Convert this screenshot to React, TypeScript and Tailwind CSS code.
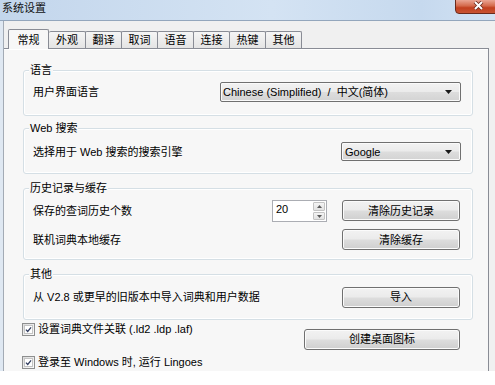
import React from "react";

function Group({
  label,
  className,
  children,
}: {
  label: string;
  className: string;
  children: React.ReactNode;
}) {
  return (
    <div
      className={
        "relative border border-[#d5dfe5] rounded-[3px] shadow-[inset_0_0_0_1px_#ffffff] " +
        className
      }
    >
      <span className="absolute left-[5px] top-[-8px] h-[14px] leading-[14px] px-[1px] bg-[#f7f7f7] whitespace-pre">
        {label}
      </span>
      {children}
    </div>
  );
}

function Arrow() {
  return (
    <svg width="7" height="4" viewBox="0 0 7 4" className="shrink-0">
      <polygon points="0,0 7,0 3.5,4" fill="#1a1a1a" />
    </svg>
  );
}

function Button({ label, className }: { label: string; className: string }) {
  return (
    <div
      className={
        "h-[21px] border border-[#707070] rounded-[3px] shadow-[inset_0_0_0_1px_#fbfbfb] bg-[linear-gradient(to_bottom,#f2f2f2_0%,#ebebeb_48%,#dddddd_52%,#cfcfcf_100%)] flex items-center justify-center leading-[14px] " +
        className
      }
    >
      {label}
    </div>
  );
}

function Check() {
  return (
    <div className="w-[13px] h-[13px] border border-[#8e8f8f] bg-[linear-gradient(to_bottom_right,#dcdcdc,#fbfbfb)] p-[1px] shrink-0">
      <div className="w-full h-full bg-white border border-[#c4c4c4] flex items-center justify-center">
        <svg width="9" height="9" viewBox="0 0 9 9">
          <path d="M1.2 4.6 L3.5 7 L7.8 1.8" stroke="#2f3b5e" strokeWidth="1.6" fill="none" />
        </svg>
      </div>
    </div>
  );
}

const tabs = ["外观", "翻译", "取词", "语音", "连接", "热键", "其他"];

export default function App() {
  return (
    <div className="w-[495px] h-[385px] bg-white overflow-hidden text-[11px] text-black font-['Liberation_Sans','Noto_Sans_CJK_SC',sans-serif]">
      {/* Title bar */}
      <div className="relative h-[21px] border-b border-[#93a6bc] bg-[linear-gradient(to_right,#c3d6ec,#d4e3f3_55%,#c6d9ee_85%,#d2e2f3)] pl-[2px]">
        <span className="block pt-[1px] leading-[14px] text-[#111]">系统设置</span>
        <div className="absolute left-[455px] top-[-1px] w-[46px] h-[15px] rounded-b-[4px] border border-[#6a2a1c] bg-[linear-gradient(to_bottom,#eaa593,#d46a4c_45%,#c2401f_60%,#c95433)] flex justify-start pl-[17px] pt-[1px]">
          <svg width="11" height="10" viewBox="0 0 11 10">
            <path d="M2 1 L9 8 M9 1 L2 8" stroke="#6a2a1c" strokeWidth="3.6" fill="none" />
            <path d="M2 1 L9 8 M9 1 L2 8" stroke="#ffffff" strokeWidth="2" fill="none" />
          </svg>
        </div>
      </div>

      {/* Client area */}
      <div className="h-[350px] flex bg-[#f0f0f0] overflow-hidden">
        <div className="w-[3px] bg-[#dfe8f2]" />
        <div className="flex-1 border-l border-[#a3abb5] flex flex-col pr-[6px]">
          {/* Tabs */}
          <div className="h-[27px] flex items-end pl-[4px] shrink-0">
            <div className="relative z-10 -mb-px w-[41px] h-[20px] border border-b-0 border-[#898c95] rounded-t-[2px] bg-[#f7f7f7] flex items-center justify-center leading-[14px]">
              常规
            </div>
            {tabs.map((t, i) => (
              <div
                key={t}
                className={
                  "h-[17px] w-[37px] border border-b-0 border-[#898c95] rounded-t-[2px] bg-[linear-gradient(to_bottom,#f5f5f5,#e4e4e4)] flex items-center justify-center leading-[14px] " +
                  (i === 0 ? "border-l-0" : "-ml-px")
                }
              >
                {t}
              </div>
            ))}
          </div>

          {/* Panel */}
          <div className="flex-1 border-t border-r border-[#898c95] bg-[#f7f7f7] shadow-[inset_0_1px_0_#ffffff] pl-[19px] pr-[15px] flex flex-col overflow-hidden">
            <Group label="语言" className="mt-[21px] h-[47px] pt-[11px] pl-[9px] pr-[11px]">
              <div className="h-[20px] flex items-center justify-between">
                <span className="leading-[14px]">用户界面语言</span>
                <div className="w-[241px] h-[20px] border border-[#707070] rounded-[2px] shadow-[inset_0_0_0_1px_#fafafa] bg-[linear-gradient(to_bottom,#f2f2f2_0%,#ebebeb_48%,#dddddd_52%,#d3d3d3_100%)] flex items-center justify-between pl-[2px] pr-[8px]">
                  <span className="leading-[14px] whitespace-pre">Chinese (Simplified)  /  中文(简体)</span>
                  <Arrow />
                </div>
              </div>
            </Group>

            <Group label="Web 搜索" className="mt-[12px] h-[47px] pt-[13px] pl-[9px] pr-[11px]">
              <div className="h-[19px] flex items-center justify-between">
                <span className="leading-[14px]">选择用于 Web 搜索的搜索引擎</span>
                <div className="w-[120px] h-[19px] border border-[#707070] rounded-[2px] shadow-[inset_0_0_0_1px_#fafafa] bg-[linear-gradient(to_bottom,#f2f2f2_0%,#ebebeb_48%,#dddddd_52%,#d3d3d3_100%)] flex items-center justify-between pl-[3px] pr-[8px]">
                  <span className="leading-[14px]">Google</span>
                  <Arrow />
                </div>
              </div>
            </Group>

            <Group label="历史记录与缓存" className="mt-[14px] h-[73px] pt-[11px] pl-[9px] pr-[12px]">
              <div className="h-[21px] flex items-center">
                <span className="flex-1 leading-[14px]">保存的查词历史个数</span>
                <div className="w-[55px] h-[22px] border border-[#abadb3] bg-white flex self-start">
                  <span className="flex-1 pl-[3px] leading-[16px]">20</span>
                  <div className="w-[14px] flex flex-col gap-[1px] p-[1px]">
                    <div className="flex-1 border border-[#c3c3c3] rounded-[1px] bg-[linear-gradient(to_bottom,#f4f4f4,#e2e2e2)] flex items-center justify-center">
                      <svg width="5" height="3" viewBox="0 0 5 3">
                        <polygon points="0,3 5,3 2.5,0" fill="#5a5a5a" />
                      </svg>
                    </div>
                    <div className="flex-1 border border-[#c3c3c3] rounded-[1px] bg-[linear-gradient(to_bottom,#f4f4f4,#e2e2e2)] flex items-center justify-center">
                      <svg width="5" height="3" viewBox="0 0 5 3">
                        <polygon points="0,0 5,0 2.5,3" fill="#5a5a5a" />
                      </svg>
                    </div>
                  </div>
                </div>
                <Button label="清除历史记录" className="w-[118px] ml-[15px]" />
              </div>
              <div className="mt-[8px] h-[21px] flex items-center">
                <span className="flex-1 leading-[14px]">联机词典本地缓存</span>
                <Button label="清除缓存" className="w-[118px]" />
              </div>
            </Group>

            <Group label="其他" className="mt-[14px] h-[47px] pt-[12px] pl-[9px] pr-[12px]">
              <div className="h-[21px] flex items-center">
                <span className="flex-1 leading-[14px] whitespace-pre">从 V2.8 或更早的旧版本中导入词典和用户数据</span>
                <Button label="导入" className="w-[118px]" />
              </div>
            </Group>

            <div className="flex items-start -ml-px mr-[13px]">
              <div className="flex-1 flex flex-col mt-[1px]">
                <div className="h-[17px] flex items-center gap-[3px]">
                  <Check />
                  <span className="leading-[14px] whitespace-pre">设置词典文件关联 (.ld2 .ldp .laf)</span>
                </div>
                <div className="mt-[16px] h-[17px] flex items-center gap-[3px]">
                  <Check />
                  <span className="leading-[14px] whitespace-pre">登录至 Windows 时, 运行 Lingoes</span>
                </div>
              </div>
              <Button label="创建桌面图标" className="w-[156px] mt-[9px]" />
            </div>
          </div>
        </div>
      </div>
    </div>
  );
}
